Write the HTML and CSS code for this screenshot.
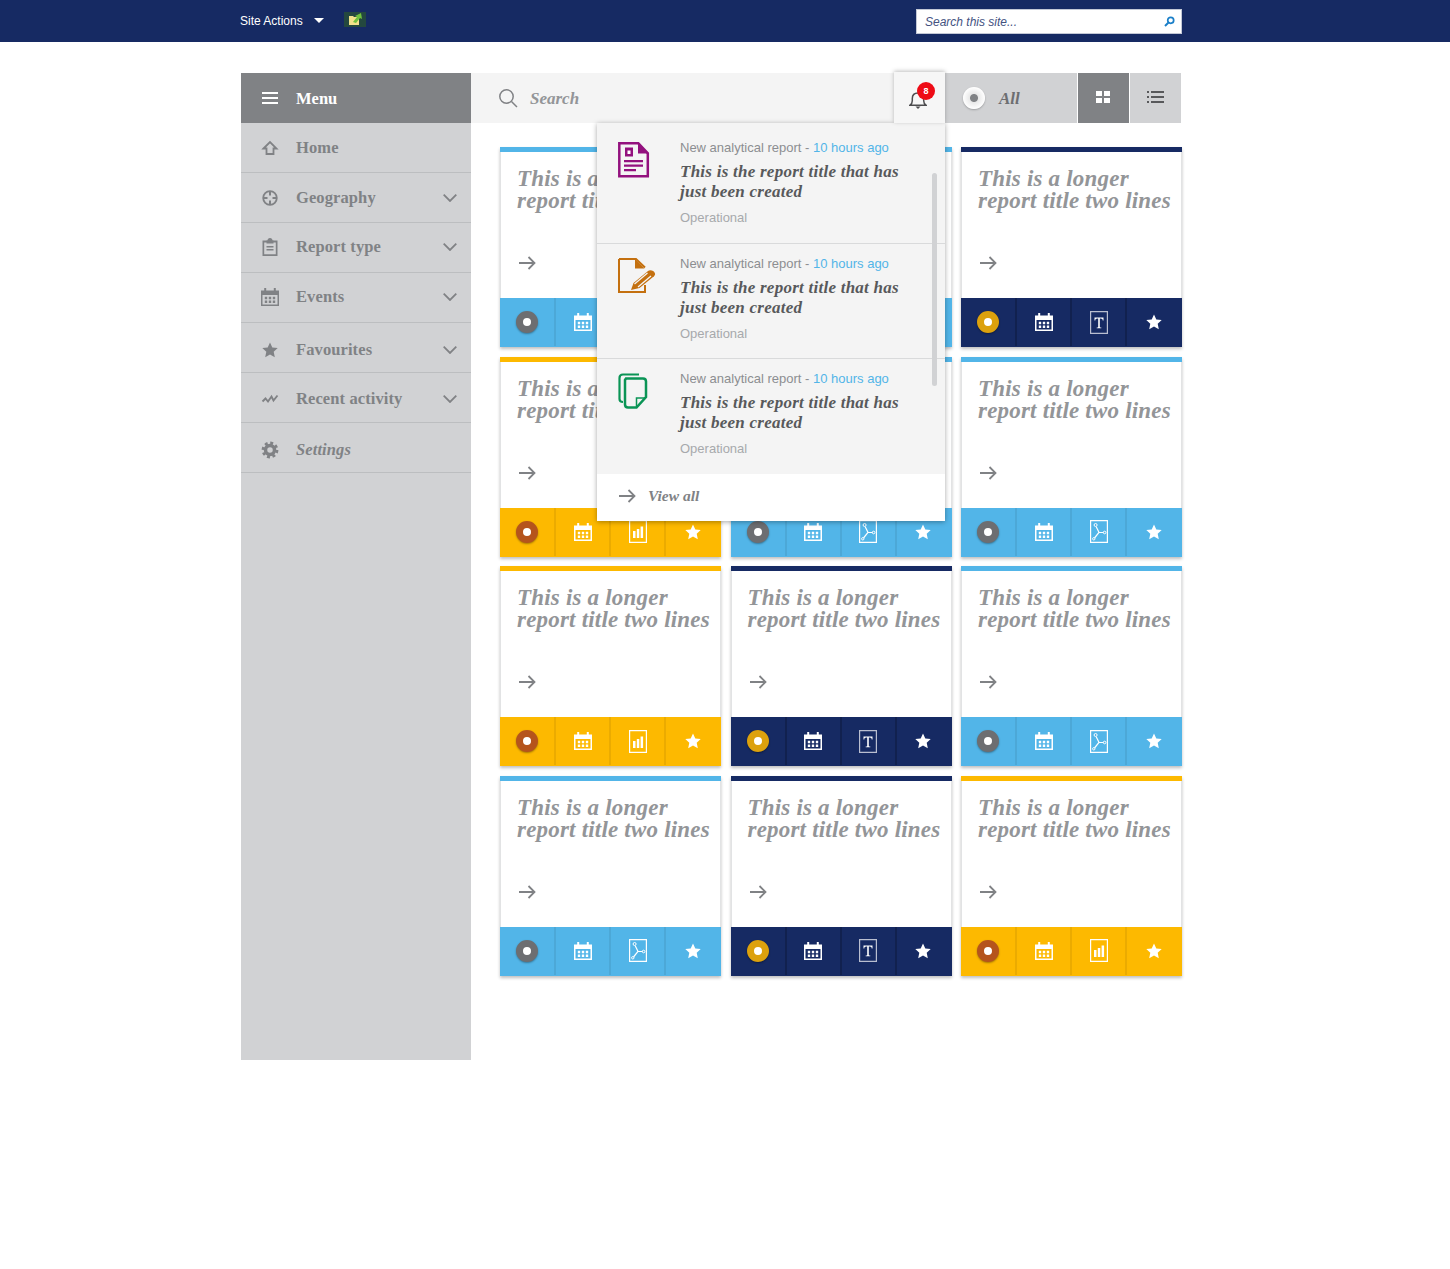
FILE: index.html
```html
<!DOCTYPE html>
<html lang="en">
<head>
    <meta charset="UTF-8">
    <title>Reports</title>
    <link rel="stylesheet" href="styles.css">
</head>
<body>
<svg class="defs" width="0" height="0">
    <symbol id="i-cal" viewBox="0 0 18 18">
        <path fill="currentColor" fill-rule="evenodd" d="M0 2.500h3.200V0h2v2.500h7.600V0h2v2.500H18V18H0zM1.500 7v9.500h15V7z"/>
        <path fill="currentColor" d="M3.800 8.800h2.400v2.400H3.800zM7.800 8.800h2.400v2.400H7.800zM11.800 8.800h2.400v2.400h-2.400zM3.800 12.500h2.400v2.400H3.800zM7.800 12.500h2.400v2.400H7.800zM11.800 12.500h2.400v2.400h-2.400z"/>
    </symbol>
    <symbol id="i-star" viewBox="0 0 16 16">
        <path fill="currentColor" d="M8 .5l2.300 5 5.400.600-4 3.700 1.100 5.400L8 12.500l-4.800 2.700 1.100-5.400-4-3.700 5.400-.600z"/>
    </symbol>
    <symbol id="i-arrow" viewBox="0 0 18 14">
        <path fill="none" stroke="currentColor" stroke-width="1.800" d="M1 7h15.500M10.500 1l6 6-6 6"/>
    </symbol>
    <symbol id="i-chev" viewBox="0 0 14 8">
        <path fill="none" stroke="currentColor" stroke-width="1.800" d="M.7.7L7 7l6.300-6.300"/>
    </symbol>
    <symbol id="i-pdf" viewBox="0 0 18 23">
        <path fill="none" stroke="currentColor" stroke-width="1.200" d="M.6.600h16.800v21.800H.6z"/>
        <path fill="none" stroke="currentColor" stroke-width="1.200" d="M6.200 6.800L9 12.500 4.500 18M9 12.500h4.500"/>
        <circle cx="5.600" cy="5" r="1.500" fill="none" stroke="currentColor"/>
        <circle cx="14.600" cy="12.500" r="1.300" fill="none" stroke="currentColor"/>
        <circle cx="3.800" cy="18.800" r="1.200" fill="none" stroke="currentColor"/>
    </symbol>
    <symbol id="i-text" viewBox="0 0 18 23">
        <path fill="none" stroke="#b9bed0" stroke-width="1.200" d="M.6.600h16.800v21.800H.6z"/>
        <path fill="currentColor" d="M4.500 6.500h9v3h-.8c0-1.300-.5-2.100-2-2.100h-.9v8.300c0 .7.500.8 1.500.8v.7H6.700v-.7c1 0 1.500-.1 1.500-.8V7.400h-.9c-1.500 0-2 .8-2 2.100h-.8z"/>
    </symbol>
    <symbol id="i-chart" viewBox="0 0 18 23">
        <path fill="none" stroke="currentColor" stroke-width="1.200" d="M.6.600h16.800v21.800H.6z"/>
        <path fill="currentColor" d="M4 11h2.500v7H4zM7.800 9h2.500v9H7.800zM11.600 6.500h2.500V18h-2.500z"/>
    </symbol>
</svg>

<div class="siteBar">
    <div class="siteBar-in">
        <span class="siteActions">Site Actions</span>
        <span class="caret"></span>
        <svg class="upload" width="22" height="15" viewBox="0 0 22 15">
            <rect width="22" height="15" fill="#24483f"/>
            <path fill="#f1e08a" d="M5 4h4l1 1h5v8H5z"/>
            <path fill="#6fc13e" d="M9 10l4-5-2-1 6-3 1 6-2-1-4 5z"/>
        </svg>
        <div class="siteSearch">
            <span>Search this site...</span>
            <svg width="11" height="11" viewBox="0 0 11 11">
                <circle cx="6.700" cy="4.300" r="3" fill="none" stroke="#1a7fc8" stroke-width="1.700"/>
                <path stroke="#1a7fc8" stroke-width="2" d="M4.500 6.500L1 10"/>
            </svg>
        </div>
    </div>
</div>

<div id="page">
    <div id="side">
        <div class="menuHead">
            <svg class="menuBars" width="16" height="12" viewBox="0 0 16 12"><path stroke="#fff" stroke-width="2" d="M0 1h16M0 6h16M0 11h16"/></svg>
            <span>Menu</span>
        </div>
        <ul class="nav">
            <li>
                <svg class="navIcon" width="18" height="18" viewBox="0 0 18 18"><path fill="none" stroke="currentColor" stroke-width="1.800" d="M2.500 9.500L9 3l6.500 6.500h-3V15h-7V9.500z"/></svg>
                <span class="navText">Home</span>
            </li>
            <li>
                <svg class="navIcon" width="18" height="18" viewBox="0 0 18 18"><circle cx="9" cy="9" r="6.800" fill="none" stroke="currentColor" stroke-width="1.800"/><path stroke="currentColor" stroke-width="2" d="M9 2v4.500M9 11.500V16M2 9h4.500M11.500 9H16"/></svg>
                <span class="navText">Geography</span>
                <svg class="chev"><use href="#i-chev"/></svg>
            </li>
            <li class="navUp">
                <svg class="navIcon" width="18" height="18" viewBox="0 0 18 18"><path fill="currentColor" fill-rule="evenodd" d="M1.500 2.500h5C6.500 1 7.500 0 9 0s2.500 1 2.500 2.500h5V18h-15zM3.200 4.500v11.800h11.600V4.500z"/><path fill="currentColor" d="M5.500 2.500h7v3h-7zM5.500 8h7v1.400h-7zM5.500 11h7v1.400h-7z"/></svg>
                <span class="navText">Report type</span>
                <svg class="chev"><use href="#i-chev"/></svg>
            </li>
            <li class="navUp">
                <svg class="navIcon" width="18" height="18"><use href="#i-cal"/></svg>
                <span class="navText">Events</span>
                <svg class="chev"><use href="#i-chev"/></svg>
            </li>
            <li class="navDown">
                <svg class="navIcon" width="16" height="16"><use href="#i-star"/></svg>
                <span class="navText">Favourites</span>
                <svg class="chev"><use href="#i-chev"/></svg>
            </li>
            <li class="navDown1">
                <svg class="navIcon" width="18" height="18" viewBox="0 0 18 18"><path fill="none" stroke="currentColor" stroke-width="1.900" d="M1.500 11.500l3-3 2.500 3 3.500-5 2 4 4-5"/></svg>
                <span class="navText">Recent activity</span>
                <svg class="chev"><use href="#i-chev"/></svg>
            </li>
            <li class="navDown">
                <svg class="navIcon" width="18" height="18" viewBox="0 0 18 18"><circle cx="9" cy="9" r="4.500" fill="none" stroke="currentColor" stroke-width="3.500"/><circle cx="9" cy="9" r="7" fill="none" stroke="currentColor" stroke-width="2.800" stroke-dasharray="2.900 2.600"/></svg>
                <span class="navText navText-em">Settings</span>
            </li>
        </ul>
    </div>

    <div id="content">
        <div class="tools">
            <div class="search">
                <svg width="20" height="20" viewBox="0 0 20 20"><circle cx="8.500" cy="8.500" r="6.700" fill="none" stroke="#808285" stroke-width="1.500"/><path stroke="#808285" stroke-width="1.500" d="M13.500 13.500l5.500 5.500"/></svg>
                <span>Search</span>
            </div>
            <div class="bell">
                <svg width="18" height="19" viewBox="0 0 18 19"><path fill="none" stroke="#4d4d4f" stroke-width="1.500" d="M1 15.200c1.500-1 2.300-2 2.300-4.500V8.500C3.300 5 5.500 3 9 3s5.700 2 5.700 5.500v2.200c0 2.500.8 3.500 2.300 4.500z"/><path fill="#4d4d4f" d="M6.500 16.500h5L9 19z"/></svg>
                <span class="badge">8</span>
            </div>
            <div class="all">
                <span class="radio"></span>
                <span>All</span>
            </div>
            <div class="viewBtn viewBtn-on">
                <svg width="14" height="12" viewBox="0 0 14 12"><path fill="#fff" d="M0 0h6v5H0zM8 0h6v5H8zM0 7h6v5H0zM8 7h6v5H8z"/></svg>
            </div>
            <div class="viewBtn">
                <svg width="17" height="12" viewBox="0 0 17 12"><path stroke="#58595b" stroke-width="1.800" d="M0 1h2M4 1h13M0 6h2M4 6h13M0 11h2M4 11h13"/></svg>
            </div>
        </div>

        <div class="cards">
            <div class="card card-blue">
                <div class="cardBody"><h3>This is a longer report title two lines</h3><svg class="go"><use href="#i-arrow"/></svg></div>
                <div class="cardFoot">
                    <div><span class="dot"></span></div>
                    <div><svg class="ic18"><use href="#i-cal"/></svg></div>
                    <div><svg class="icDoc"><use href="#i-pdf"/></svg></div>
                    <div><svg class="ic16"><use href="#i-star"/></svg></div>
                </div>
            </div>
            <div class="card card-blue">
                <div class="cardBody"><h3>This is a longer report title two lines</h3><svg class="go"><use href="#i-arrow"/></svg></div>
                <div class="cardFoot">
                    <div><span class="dot"></span></div>
                    <div><svg class="ic18"><use href="#i-cal"/></svg></div>
                    <div><svg class="icDoc"><use href="#i-pdf"/></svg></div>
                    <div><svg class="ic16"><use href="#i-star"/></svg></div>
                </div>
            </div>
            <div class="card card-navy">
                <div class="cardBody"><h3>This is a longer report title two lines</h3><svg class="go"><use href="#i-arrow"/></svg></div>
                <div class="cardFoot">
                    <div><span class="dot"></span></div>
                    <div><svg class="ic18"><use href="#i-cal"/></svg></div>
                    <div><svg class="icDoc"><use href="#i-text"/></svg></div>
                    <div><svg class="ic16"><use href="#i-star"/></svg></div>
                </div>
            </div>

            <div class="card card-yellow">
                <div class="cardBody"><h3>This is a longer report title two lines</h3><svg class="go"><use href="#i-arrow"/></svg></div>
                <div class="cardFoot">
                    <div><span class="dot"></span></div>
                    <div><svg class="ic18"><use href="#i-cal"/></svg></div>
                    <div><svg class="icDoc"><use href="#i-chart"/></svg></div>
                    <div><svg class="ic16"><use href="#i-star"/></svg></div>
                </div>
            </div>
            <div class="card card-blue">
                <div class="cardBody"><h3>This is a longer report title two lines</h3><svg class="go"><use href="#i-arrow"/></svg></div>
                <div class="cardFoot">
                    <div><span class="dot"></span></div>
                    <div><svg class="ic18"><use href="#i-cal"/></svg></div>
                    <div><svg class="icDoc"><use href="#i-pdf"/></svg></div>
                    <div><svg class="ic16"><use href="#i-star"/></svg></div>
                </div>
            </div>
            <div class="card card-blue">
                <div class="cardBody"><h3>This is a longer report title two lines</h3><svg class="go"><use href="#i-arrow"/></svg></div>
                <div class="cardFoot">
                    <div><span class="dot"></span></div>
                    <div><svg class="ic18"><use href="#i-cal"/></svg></div>
                    <div><svg class="icDoc"><use href="#i-pdf"/></svg></div>
                    <div><svg class="ic16"><use href="#i-star"/></svg></div>
                </div>
            </div>

            <div class="card card-yellow">
                <div class="cardBody"><h3>This is a longer report title two lines</h3><svg class="go"><use href="#i-arrow"/></svg></div>
                <div class="cardFoot">
                    <div><span class="dot"></span></div>
                    <div><svg class="ic18"><use href="#i-cal"/></svg></div>
                    <div><svg class="icDoc"><use href="#i-chart"/></svg></div>
                    <div><svg class="ic16"><use href="#i-star"/></svg></div>
                </div>
            </div>
            <div class="card card-navy">
                <div class="cardBody"><h3>This is a longer report title two lines</h3><svg class="go"><use href="#i-arrow"/></svg></div>
                <div class="cardFoot">
                    <div><span class="dot"></span></div>
                    <div><svg class="ic18"><use href="#i-cal"/></svg></div>
                    <div><svg class="icDoc"><use href="#i-text"/></svg></div>
                    <div><svg class="ic16"><use href="#i-star"/></svg></div>
                </div>
            </div>
            <div class="card card-blue">
                <div class="cardBody"><h3>This is a longer report title two lines</h3><svg class="go"><use href="#i-arrow"/></svg></div>
                <div class="cardFoot">
                    <div><span class="dot"></span></div>
                    <div><svg class="ic18"><use href="#i-cal"/></svg></div>
                    <div><svg class="icDoc"><use href="#i-pdf"/></svg></div>
                    <div><svg class="ic16"><use href="#i-star"/></svg></div>
                </div>
            </div>

            <div class="card card-blue">
                <div class="cardBody"><h3>This is a longer report title two lines</h3><svg class="go"><use href="#i-arrow"/></svg></div>
                <div class="cardFoot">
                    <div><span class="dot"></span></div>
                    <div><svg class="ic18"><use href="#i-cal"/></svg></div>
                    <div><svg class="icDoc"><use href="#i-pdf"/></svg></div>
                    <div><svg class="ic16"><use href="#i-star"/></svg></div>
                </div>
            </div>
            <div class="card card-navy">
                <div class="cardBody"><h3>This is a longer report title two lines</h3><svg class="go"><use href="#i-arrow"/></svg></div>
                <div class="cardFoot">
                    <div><span class="dot"></span></div>
                    <div><svg class="ic18"><use href="#i-cal"/></svg></div>
                    <div><svg class="icDoc"><use href="#i-text"/></svg></div>
                    <div><svg class="ic16"><use href="#i-star"/></svg></div>
                </div>
            </div>
            <div class="card card-yellow">
                <div class="cardBody"><h3>This is a longer report title two lines</h3><svg class="go"><use href="#i-arrow"/></svg></div>
                <div class="cardFoot">
                    <div><span class="dot"></span></div>
                    <div><svg class="ic18"><use href="#i-cal"/></svg></div>
                    <div><svg class="icDoc"><use href="#i-chart"/></svg></div>
                    <div><svg class="ic16"><use href="#i-star"/></svg></div>
                </div>
            </div>
        </div>

        <div class="notes">
            <div class="noteList">
                <div class="note note-first">
                    <svg class="noteIcon" width="32" height="36" viewBox="0 0 32 36">
                        <path fill="none" stroke="#93117e" stroke-width="2.500" d="M1.300 1.300h19l9.500 10v23H1.300z"/>
                        <path fill="#93117e" d="M20 1l10 10.500H20z"/>
                        <path fill="#93117e" d="M7 5.500h8v9H7zM6 18h19v2.200H6zM6 22.500h19v2.200H6zM6 27h12v2.200H6z"/>
                        <rect x="9.500" y="8.500" width="3" height="3.500" fill="#fff"/>
                    </svg>
                    <div class="noteText">
                        <p class="noteMeta">New analytical report - <a>10 hours ago</a></p>
                        <h4>This is the report title that has just been created</h4>
                        <p class="noteType">Operational</p>
                    </div>
                </div>
                <div class="note">
                    <svg class="noteIcon" width="38" height="36" viewBox="0 0 38 36">
                        <path fill="none" stroke="#c4700f" stroke-width="2" d="M1 1h17l9 8.500M27 27v7H1V1"/>
                        <path fill="#c4700f" d="M17 1l9.500 9.500H17z"/>
                        <path fill="#c4700f" d="M13 32l2.500-7L30 13c2-1.500 6-.5 7 2.500.3 1-.3 2-1 2.700L21.500 30z"/>
                        <path fill="none" stroke="#f4f4f4" stroke-width="1.300" d="M16.500 26l13-11M20 29l13-11"/>
                    </svg>
                    <div class="noteText">
                        <p class="noteMeta">New analytical report - <a>10 hours ago</a></p>
                        <h4>This is the report title that has just been created</h4>
                        <p class="noteType">Operational</p>
                    </div>
                </div>
                <div class="note">
                    <svg class="noteIcon" width="30" height="36" viewBox="0 0 30 36">
                        <path fill="none" stroke="#0a9455" stroke-width="2.200" d="M5 29c-2.500 0-3.500-1-3.500-3V5c0-2.500 1.500-3.500 3.500-3.500h16"/>
                        <path fill="none" stroke="#0a9455" stroke-width="2.500" d="M8 5.500h17c1.800 0 3 1 3 3V24l-9.500 10.500H10c-2 0-3-1-3-3V7z"/>
                        <path fill="none" stroke="#0a9455" stroke-width="1.500" d="M18.500 34V25h9"/>
                    </svg>
                    <div class="noteText">
                        <p class="noteMeta">New analytical report - <a>10 hours ago</a></p>
                        <h4>This is the report title that has just been created</h4>
                        <p class="noteType">Operational</p>
                    </div>
                </div>
                <span class="scroller"></span>
            </div>
            <div class="viewAll">
                <svg class="go"><use href="#i-arrow"/></svg>
                <span>View all</span>
            </div>
        </div>
    </div>
</div>
</body>
</html>
```

FILE: styles.css
```css
*{
    margin: 0;
    padding: 0;
    box-sizing: border-box;
}
body{
    background: #fff;
    font-family: "Liberation Sans", Arial, sans-serif;
}
li{
    list-style: none;
}
.defs{
    position: absolute;
}
.siteBar{
    height: 42px;
    background: #162a63;
}
.siteBar-in{
    display: flex;
    align-items: center;
    width: 942px;
    height: 42px;
    margin-left: 240px;
}
.siteActions{
    color: #fff;
    font-size: 12px;
    margin-bottom: 1px;
}
.caret{
    width: 0;
    height: 0;
    margin: 0 20px 2px 11px;
    border-left: 5px solid transparent;
    border-right: 5px solid transparent;
    border-top: 5px solid #fff;
}
.upload{
    margin-bottom: 3px;
}
.siteSearch{
    display: flex;
    align-items: center;
    justify-content: space-between;
    width: 266px;
    height: 25px;
    margin-left: auto;
    margin-top: 1px;
    padding: 0 6px 0 8px;
    background: #fff;
    border: 1px solid #c3c8d6;
    color: #44527f;
    font-size: 12px;
    font-style: italic;
}
#page{
    display: flex;
    width: 941px;
    margin: 31px 0 0 241px;
}
#side{
    width: 230px;
    height: 987px;
    background: #d1d2d4;
    flex-shrink: 0;
}
.menuHead{
    display: flex;
    align-items: center;
    height: 50px;
    padding-left: 21px;
    background: #808285;
    color: #fff;
    font: bold 16.500px "Liberation Serif", serif;
}
.menuHead span{
    margin-left: 18px;
    margin-top: 1px;
}
.nav li{
    display: flex;
    align-items: center;
    height: 50px;
    padding-left: 20px;
    border-bottom: 1px solid #bcbec0;
    color: #808285;
}
.nav .navUp{
    padding-bottom: 2px;
}
.nav .navDown{
    padding-top: 4px;
}
.nav .navDown1{
    padding-top: 2px;
}
.navIcon{
    width: 18px;
    flex-shrink: 0;
}
.navText{
    margin-left: 17px;
    font: bold 16.500px "Liberation Serif", serif;
    letter-spacing: .1px;
}
.navText-em{
    font-style: italic;
}
.chev{
    width: 14px;
    height: 8px;
    margin-left: auto;
    margin-right: 14px;
}
#content{
    position: relative;
    width: 711px;
}
.tools{
    display: flex;
    width: 710px;
    height: 50px;
}
.search{
    display: flex;
    align-items: center;
    flex: 1;
    padding-left: 27px;
    background: #f4f4f4;
    color: #939598;
    font: italic bold 17px "Liberation Serif", serif;
}
.search span{
    margin-left: 12px;
    margin-top: 1px;
}
.bell{
    position: relative;
    z-index: 3;
    width: 51px;
    height: 51px;
    margin-top: -1px;
    padding: 18px 0 0 15px;
    background: #f6f6f6;
    box-shadow: 0 -1px 4px rgba(0,0,0,.25);
}
.badge{
    position: absolute;
    top: 10px;
    left: 23px;
    width: 18px;
    height: 18px;
    border-radius: 50%;
    background: #ee0b16;
    color: #fff;
    font-size: 9px;
    font-weight: bold;
    line-height: 18px;
    text-align: center;
}
.all{
    display: flex;
    align-items: center;
    width: 132px;
    padding-left: 18px;
    margin-right: 1px;
    background: #d1d2d4;
    color: #6d6e71;
    font: italic bold 17px "Liberation Serif", serif;
}
.all span:last-child{
    margin-left: 14px;
    margin-top: 1px;
}
.radio{
    width: 22px;
    height: 22px;
    border-radius: 50%;
    background: radial-gradient(circle, #808285 0, #808285 3.500px, #e9e9e9 4.500px, #fff 11px);
    box-shadow: 0 1px 2px rgba(0,0,0,.25);
}
.viewBtn{
    display: flex;
    align-items: center;
    justify-content: center;
    width: 51px;
    padding-bottom: 2px;
    background: #d1d2d4;
}
.viewBtn-on{
    margin-right: 1px;
    padding-right: 2px;
    background: #808285;
}
.cards{
    display: grid;
    grid-template-columns: repeat(3, 221px);
    grid-auto-rows: 200px;
    gap: 9.5px;
    padding: 24px 0 0 29px;
}
.card{
    display: flex;
    flex-direction: column;
    border-top: 5px solid;
    box-shadow: 0 2px 3px rgba(0,0,0,.25);
}
.cardBody{
    display: flex;
    flex-direction: column;
    flex: 1;
    padding: 16px 5px 28px 16px;
    background: #fff;
    border: 1px solid #e2e3e4;
    border-width: 0 1px;
}
.cardBody h3{
    color: #939598;
    font: italic bold 23px/22px "Liberation Serif", serif;
    letter-spacing: .2px;
}
.go{
    width: 18px;
    height: 14px;
    margin-top: auto;
    margin-left: 1px;
    color: #808285;
}
.cardFoot{
    display: flex;
    height: 49px;
    padding-bottom: 1px;
    color: #fff;
}
.cardFoot div{
    display: flex;
    align-items: center;
    justify-content: center;
    width: 55px;
    border-left: 2px solid rgba(0,0,0,.07);
}
.cardFoot div:first-child{
    width: 54px;
    border-left: 0;
}
.cardFoot div:last-child{
    flex: 1;
    padding-right: 2px;
}
.dot{
    width: 22px;
    height: 22px;
    border-radius: 50%;
    border: 7.500px solid;
    background: #fff;
    box-shadow: 0 1px 2px rgba(0,0,0,.35);
}
.ic18{
    width: 18px;
    height: 18px;
}
.ic16{
    width: 16px;
    height: 16px;
}
.icDoc{
    width: 18px;
    height: 23px;
}
.card-blue{
    border-color: #52b5e8;
}
.card-blue .cardFoot{
    background: #52b5e8;
}
.card-blue .dot{
    border-color: #6d6e71;
}
.card-navy{
    border-color: #162a63;
}
.card-navy .cardFoot{
    background: #162a63;
}
.card-navy .cardFoot div{
    border-left-color: rgba(0,0,0,.2);
}
.card-navy .cardFoot div:first-child{
    border-left: 0;
}
.card-navy .dot{
    border-color: #dca10d;
}
.card-yellow{
    border-color: #fdb900;
}
.card-yellow .cardFoot{
    background: #fdb900;
}
.card-yellow .dot{
    border-color: #b5541c;
}

.notes{
    position: absolute;
    z-index: 2;
    top: 50px;
    left: 126px;
    width: 348px;
    background: #fff;
    box-shadow: 0 1px 5px rgba(0,0,0,.35);
}
.noteList{
    position: relative;
    background: #f4f4f4;
}
.note{
    display: flex;
    height: 115px;
    padding: 12px 0 0 21px;
    border-bottom: 1px solid #d9dadb;
}
.note-first{
    height: 121px;
    padding-top: 17px;
}
.note:last-of-type{
    border-bottom: 0;
}
.noteIcon{
    flex-shrink: 0;
    margin-top: 2px;
}
.noteText{
    position: absolute;
    left: 83px;
    width: 226px;
}
.noteMeta{
    color: #8c8e91;
    font-size: 13px;
    line-height: 16px;
}
.noteMeta a{
    color: #52b5e8;
}
.note h4{
    margin-top: 6px;
    color: #58595b;
    font: italic bold 17px/20px "Liberation Serif", serif;
    letter-spacing: .25px;
}
.noteType{
    margin-top: 8px;
    color: #a7a9ac;
    font-size: 13px;
    line-height: 16px;
}
.scroller{
    position: absolute;
    top: 50px;
    right: 8px;
    width: 5px;
    height: 213px;
    border-radius: 3px;
    background: #d1d2d4;
}
.viewAll{
    display: flex;
    align-items: center;
    height: 47px;
    padding: 0 0 4px 21px;
    color: #808285;
    font: italic bold 15.500px "Liberation Serif", serif;
}
.viewAll .go{
    margin: 0 12px 0 0;
}
```
